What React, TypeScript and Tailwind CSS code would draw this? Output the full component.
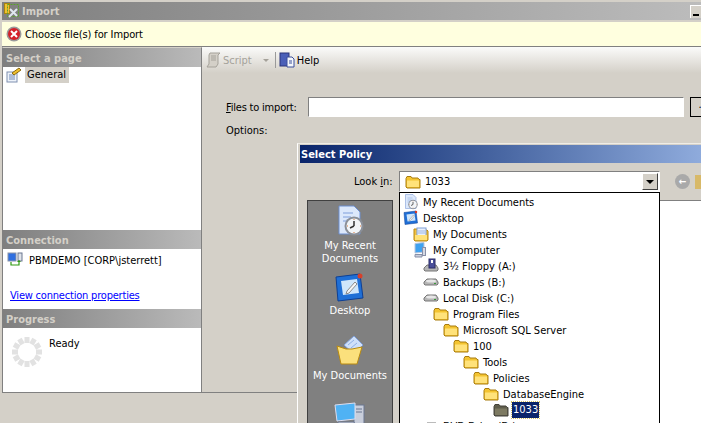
const font = "[font-family:'DejaVu_Sans_Condensed','DejaVu_Sans',sans-serif]";

function Folder({ gray = false, size = 16 }: { gray?: boolean; size?: number }) {
  const body = gray ? "#7d7a62" : "#ffe27a";
  const edge = gray ? "#45433a" : "#a87c10";
  const back = gray ? "#5f5d4c" : "#f4c430";
  return (
    <svg width={size} height={size} viewBox="0 0 16 16" className="shrink-0">
      <path d="M1 4.500 2 2.500h4l1 1.500h6l1 1.500h1V14H2l-1-1z" fill={back} stroke={edge} strokeWidth="1" />
      <path d="M2 6.500h12V13H2z" fill={body} />
    </svg>
  );
}

function Drive() {
  return (
    <svg width="16" height="16" viewBox="0 0 16 16" className="shrink-0">
      <path d="M1 8 4 5h9l2 3v2l-1 1H2l-1-1z" fill="#b5b5b5" stroke="#777" />
      <ellipse cx="8" cy="7" rx="5" ry="1.500" fill="#e6e6e6" />
      <rect x="11" y="9" width="2" height="1" fill="#3a9a3a" />
    </svg>
  );
}

function Floppy() {
  return (
    <svg width="16" height="16" viewBox="0 0 16 16" className="shrink-0">
      <path d="M1 10 4 7h9l2 3v2l-1 1H2l-1-1z" fill="#b5b5b5" stroke="#777" />
      <rect x="6" y="1" width="6" height="9" fill="#4a4f9a" stroke="#2a2d66" />
      <rect x="8" y="2" width="2" height="3" fill="#fff" />
    </svg>
  );
}

function RecentIcon({ size = 16 }: { size?: number }) {
  return (
    <svg width={size} height={size} viewBox="0 0 32 32" className="shrink-0">
      <path d="M5 1h15l6 6v22H5z" fill="#dce8fb" stroke="#6d8fd0" />
      <path d="M9 8h10M9 12h8M9 16h6" stroke="#9db7e6" strokeWidth="1.500" />
      <circle cx="20" cy="21" r="9.500" fill="#8a8f98" />
      <circle cx="20" cy="21" r="7.500" fill="#f2f5f8" />
      <path d="M20 21v-5M20 21l-4 2" stroke="#333" strokeWidth="1.500" />
      <path d="M20 14v1M27 21h-1M20 28v-1M13 21h1" stroke="#e07a3a" />
    </svg>
  );
}

function DesktopIcon({ size = 16 }: { size?: number }) {
  return (
    <svg width={size} height={size} viewBox="0 0 32 32" className="shrink-0">
      <path d="M2 5l24-3 3 24-25 3z" fill="#1f6fd6" stroke="#0d3f94" />
      <path d="M7 9l16-2 2 14-16 2z" fill="#cfe6fb" />
      <path d="M13 19l8-9 2 2-8 9-3 1z" fill="#f5f5f5" stroke="#8a8a8a" />
      <circle cx="26" cy="4" r="2.500" fill="#d8402a" />
    </svg>
  );
}

function DocsIcon({ size = 16 }: { size?: number }) {
  return (
    <svg width={size} height={size} viewBox="0 0 16 16" className="shrink-0">
      <path d="M1 3h6l1 1h6l1 1v9l-1 1H2l-1-1z" fill="#f0c040" stroke="#b98a10" />
      <rect x="4" y="2" width="9" height="9" fill="#e8f0fc" stroke="#7f9fd8" />
      <path d="M5 5h7M5 7h7" stroke="#9db7e6" />
      <path d="M2 9h12v5H2z" fill="#ffe27a" />
    </svg>
  );
}

function ComputerIcon({ size = 16 }: { size?: number }) {
  return (
    <svg width={size} height={size} viewBox="0 0 16 16" className="shrink-0">
      <path d="M2 1.500l9-1V10l-9 1z" fill="#3fa2f0" stroke="#b9c6de" />
      <rect x="9.500" y="5.500" width="3" height="8" fill="#d5d9e4" stroke="#8890a8" />
      <path d="M2 12.500h7v2.500H2z" fill="#c9cedb" stroke="#8890a8" />
    </svg>
  );
}

function OpenDocsIcon() {
  return (
    <svg width="32" height="32" viewBox="0 0 32 32" className="shrink-0">
      <path d="M10 10 20 1l9 9-9 9z" fill="#cfe0fa" stroke="#7f9fd8" />
      <path d="M14 10l6-5M17 13l6-5" stroke="#8fb0e6" />
      <path d="M3 11l9 3 6 0 10-2-5 17H7z" fill="#fbe07c" stroke="#b98a10" />
    </svg>
  );
}

function BigComputerIcon() {
  return (
    <svg width="32" height="32" viewBox="0 0 32 32" className="shrink-0">
      <rect x="20" y="3" width="10" height="27" fill="#c9cedb" stroke="#6a7690" />
      <path d="M22 7h6M22 10h6" stroke="#6a7690" />
      <path d="M1 3l20-2v16L3 19z" fill="#4fb2f4" stroke="#dde" />
      <path d="M4 20h16l3 8H3z" fill="#d5d9e4" stroke="#6a7690" />
    </svg>
  );
}

function ErrorIcon() {
  return (
    <svg width="16" height="16" viewBox="0 0 16 16" className="shrink-0">
      <circle cx="8" cy="8" r="7.500" fill="#9a9a9a" />
      <circle cx="8" cy="8" r="6" fill="#d4202a" />
      <path d="M5 5l6 6M11 5l-6 6" stroke="#fff" strokeWidth="2" />
    </svg>
  );
}

function AppIcon() {
  return (
    <svg width="16" height="16" viewBox="0 0 16 16" className="shrink-0">
      <rect x="0.500" y="0.500" width="5" height="10" fill="#f0c030" stroke="#a88510" />
      <rect x="3.500" y="1.500" width="11" height="12" fill="none" stroke="#5aa02c" strokeDasharray="2 1" />
      <path d="M5 14l8-8M6 6l7 7" stroke="#dfe7ef" strokeWidth="2" />
    </svg>
  );
}

function PageIcon() {
  return (
    <svg width="16" height="16" viewBox="0 0 16 16" className="shrink-0">
      <rect x="1" y="5" width="10" height="10" fill="#eef3fa" stroke="#7f8fb0" />
      <path d="M3 8h6M3 10h6M3 12h6" stroke="#6f88b8" />
      <path d="M6 6l7-5 2 2-7 5z" fill="#f0c030" stroke="#8a6a10" />
    </svg>
  );
}

function ConnIcon() {
  return (
    <svg width="16" height="16" viewBox="0 0 16 16" className="shrink-0">
      <rect x="1" y="1" width="8" height="8" fill="#2f6fe0" stroke="#8a93a8" />
      <rect x="11" y="1" width="4" height="8" fill="#dfe3ea" stroke="#6a7690" />
      <path d="M4 10v3h8v-3" fill="none" stroke="#2f9a10" strokeWidth="1.200" />
      <path d="M10 10h4l-2-2z" fill="#2f9a10" />
    </svg>
  );
}

function Spinner() {
  const dots = Array.from({ length: 12 }, (_, i) => i * 30);
  return (
    <svg width="30" height="30" viewBox="0 0 30 30" className="shrink-0">
      {dots.map((a) => (
        <rect key={a} x="12.500" y="0" width="5" height="6" fill="#e2e2e2" transform={`rotate(${a} 15 15)`} />
      ))}
    </svg>
  );
}

function HelpIcon() {
  return (
    <svg width="16" height="16" viewBox="0 0 16 16" className="shrink-0">
      <rect x="1" y="1" width="9" height="13" fill="#4a5fb8" stroke="#2a357a" />
      <path d="M8 5h5l2 2v8H8z" fill="#f4f7fc" stroke="#3a4f9a" />
      <path d="M10 9h3M10 11h3" stroke="#3a4f9a" />
    </svg>
  );
}

function ScriptIcon() {
  return (
    <svg width="16" height="16" viewBox="0 0 16 16" className="shrink-0">
      <path d="M4 1h10l-2 2v9l-2 3H1l2-3V3z" fill="#d4d0c8" stroke="#a5a29a" />
      <path d="M5 4h5M5 6h5M5 8h5" stroke="#a5a29a" />
    </svg>
  );
}

function Section({ title }: { title: string }) {
  return (
    <div className="flex h-[19px] shrink-0 items-center bg-gradient-to-r from-[#7f7f7f] to-[#bababa] pl-[3px] pt-px font-bold text-[#d4d0c8]">
      {title}
    </div>
  );
}

const rows: { label: string; level: number; icon: React.ReactNode; selected?: boolean }[] = [
  { label: "My Recent Documents", level: 0, icon: <RecentIcon /> },
  { label: "Desktop", level: 0, icon: <DesktopIcon /> },
  { label: "My Documents", level: 1, icon: <DocsIcon /> },
  { label: "My Computer", level: 1, icon: <ComputerIcon /> },
  { label: "3½ Floppy (A:)", level: 2, icon: <Floppy /> },
  { label: "Backups (B:)", level: 2, icon: <Drive /> },
  { label: "Local Disk (C:)", level: 2, icon: <Drive /> },
  { label: "Program Files", level: 3, icon: <Folder /> },
  { label: "Microsoft SQL Server", level: 4, icon: <Folder /> },
  { label: "100", level: 5, icon: <Folder /> },
  { label: "Tools", level: 6, icon: <Folder /> },
  { label: "Policies", level: 7, icon: <Folder /> },
  { label: "DatabaseEngine", level: 8, icon: <Folder /> },
  { label: "1033", level: 9, icon: <Folder gray />, selected: true },
  { label: "DVD Drive (D:)", level: 2, icon: <Drive /> },
];

function SelectPolicy() {
  return (
    <div className="absolute left-[297px] top-[143px] flex h-[280px] w-[404px] flex-col border-l border-t border-l-white border-t-[#efece6] bg-[#d4d0c8] pl-[2px] pt-px">
      <div className="flex h-[18px] shrink-0 items-center bg-gradient-to-r from-[#0a246a] to-[#8fabdc] pl-px font-bold text-white">
        Select Policy
      </div>
      <div className="relative flex min-h-0 flex-1 pl-[7px] pt-[37px]">
        {/* places bar */}
        <div className="flex h-[300px] w-[86px] shrink-0 flex-col items-center border border-[#404040] bg-[#808080] text-center text-white">
          <div className="mt-[4px]"><RecentIcon size={32} /></div>
          <span className="mt-[2px]">My Recent<br />Documents</span>
          <div className="mt-[7px]"><DesktopIcon size={32} /></div>
          <span>Desktop</span>
          <div className="mt-[18px]"><OpenDocsIcon /></div>
          <span className="mt-[2px]">My Documents</span>
          <div className="mt-[20px]"><BigComputerIcon /></div>
        </div>
        <div className="ml-[7px] min-w-0 flex-1 border-t border-[#808080] bg-white" />
        {/* look in row */}
        <div className="absolute left-0 top-[8px] flex h-[21px] items-center">
          <span className="ml-[54px] w-[45px] shrink-0">Look <span className="underline">i</span>n:</span>
          <div className="flex h-[21px] w-[261px] shrink-0 items-center border border-[#808080] border-b-white border-r-white bg-white pl-[5px]">
            <Folder />
            <span className="ml-[4px] flex-1">1033</span>
            <div className="mr-px flex h-[17px] w-[16px] items-center justify-center border border-b-[#404040] border-l-white border-r-[#404040] border-t-white bg-[#d4d0c8]">
              <div className="h-0 w-0 border-x-[4px] border-t-[4px] border-x-transparent border-t-black" />
            </div>
          </div>
          <div className="ml-[15px] flex h-[15px] w-[15px] shrink-0 items-center justify-center rounded-full bg-[#a9a9a9] text-[10px] font-bold leading-none text-white">←</div>
          <div className="ml-[5px] h-[14px] w-[16px] shrink-0 bg-[#d8b968]" />
        </div>
        {/* open combo list */}
        <div className="absolute left-[99px] top-[29px] h-[240px] w-[261px] overflow-hidden border border-black bg-white pt-px">
          {rows.map((r) => (
            <div key={r.label} className="flex h-[16px] items-center" style={{ paddingLeft: 3 + r.level * 10 }}>
              {r.icon}
              <span className={r.selected ? "ml-[3px] bg-[#0a246a] px-px leading-[16px] text-white outline-1 outline-dotted outline-[#d4c060]" : "ml-[4px]"}>{r.label}</span>
            </div>
          ))}
        </div>
      </div>
    </div>
  );
}

export default function App() {
  return (
    <div className={`${font} relative h-[423px] w-[701px] overflow-hidden bg-[#d4d0c8] text-[11px] leading-[13px] text-black`}>
      <div className="pl-[2px] pt-[2px]">
        <div className="flex h-[18px] items-center justify-between bg-gradient-to-r from-[#7f7f7f] to-[#bcbcbc] font-bold text-[#d4d0c8]">
          <div className="flex items-center gap-[2px] pl-[2px]">
            <AppIcon />
            Import
          </div>
          <div className="flex h-[13px] w-[11px] items-end justify-center border border-b-0 border-r-0 border-l-white border-t-white bg-[#d4d0c8] pb-[2px]">
            <div className="h-[2px] w-[6px] bg-black" />
          </div>
        </div>
        <div className="flex h-[27px] items-center gap-[3px] border-b border-t-2 border-b-[#808080] border-t-[#d4d0c8] bg-[#ffffdf] pl-[4px] tracking-[-0.1px]">
          <ErrorIcon />
          Choose file(s) for Import
        </div>
        <div className="flex h-[346px] border-b border-[#808080]">
          <div className="flex h-[346px] w-[200px] shrink-0 flex-col border-x border-x-[#808080] border-b border-b-[#808080] border-t border-t-[#d4d0c8] bg-white">
            <Section title="Select a page" />
            <div className="h-[163px] shrink-0 pl-[3px]">
              <div className="flex h-[16px] items-center">
                <PageIcon />
                <span className="ml-[3px] bg-[#d4d0c8] pl-[2px] pr-[3px] leading-[16px]">General</span>
              </div>
            </div>
            <Section title="Connection" />
            <div className="h-[60px] shrink-0">
              <div className="flex items-center pl-[4px] pt-[3px]">
                <ConnIcon />
                <span className="ml-[6px]">PBMDEMO [CORP\jsterrett]</span>
              </div>
              <div className="pl-[7px] pt-[21px] tracking-[-0.2px] text-[#0000ff] underline">View connection properties</div>
            </div>
            <Section title="Progress" />
            <div className="flex flex-1 pl-[9px] pt-[9px]">
              <Spinner />
              <span className="ml-[7px]">Ready</span>
            </div>
          </div>
          <div className="min-w-0 flex-1">
            <div className="flex h-[26px] items-center bg-gradient-to-b from-[#fbfbfa] to-[#d4d0c8] pl-[4px]">
              <ScriptIcon />
              <span className="ml-px text-[#a5a29a]">Script</span>
              <div className="ml-[11px] h-0 w-0 border-x-[3px] border-t-[3px] border-x-transparent border-t-[#a5a29a]" />
              <div className="ml-[6px] h-[16px] w-px bg-[#9a9a9a]" />
              <div className="ml-[3px]"><HelpIcon /></div>
              <span className="ml-[2px]">Help</span>
            </div>
            <div className="flex items-center pl-[24px] pt-[24px]">
              <span className="w-[82px] shrink-0 tracking-[-0.2px]"><span className="underline">F</span>iles to import:</span>
              <div className="h-[20px] w-[376px] shrink-0 border border-[#808080] border-b-white border-r-white bg-white" />
              <div className="ml-[6px] flex h-[20px] w-[20px] shrink-0 justify-center border border-b-black border-l-black border-t-black bg-[#d4d0c8]">.</div>
            </div>
            <div className="pl-[24px] pt-[7px]">Options:</div>
          </div>
        </div>
      </div>
      <SelectPolicy />
    </div>
  );
}
